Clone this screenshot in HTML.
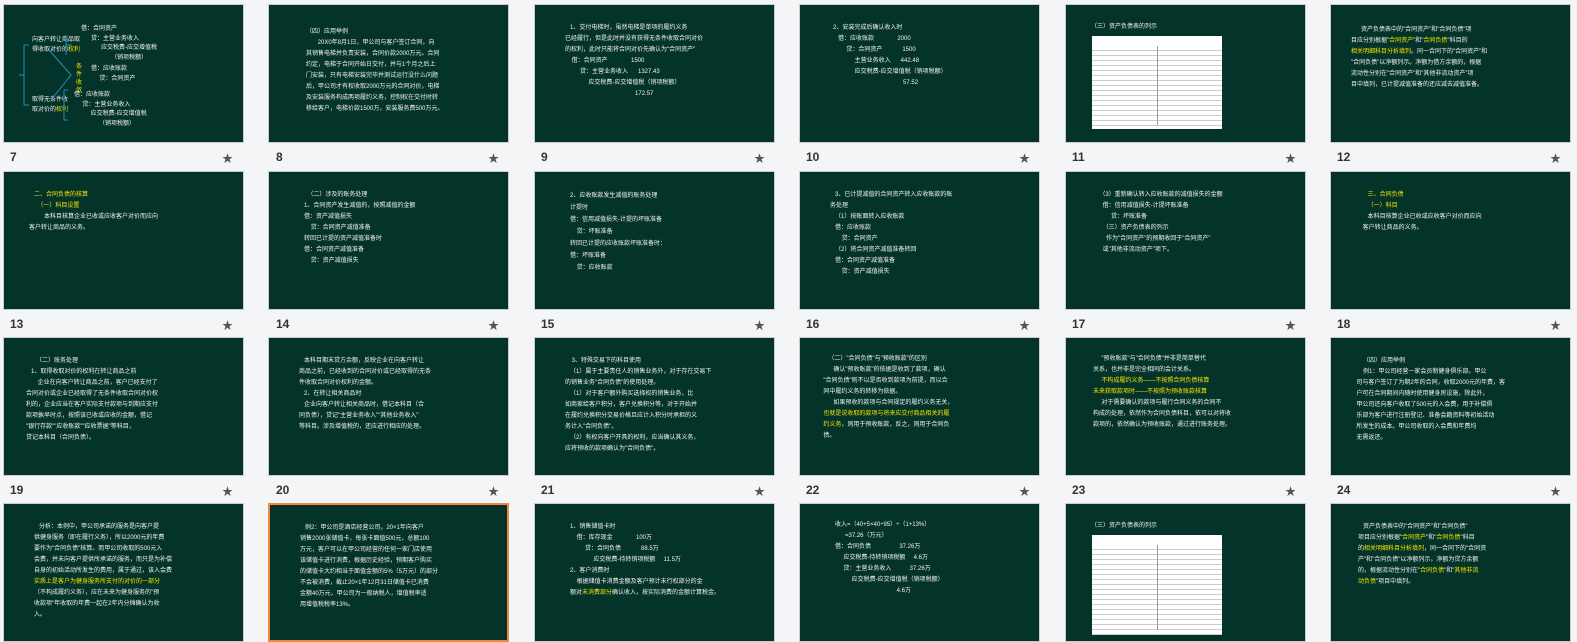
<!DOCTYPE html>
<html><head><meta charset="utf-8"><style>
body{margin:0;width:1577px;height:642px;background:#f4f5f7;position:relative;overflow:hidden;font-family:"Liberation Sans","Noto Sans CJK SC",sans-serif}
.s{position:absolute;width:239px;height:137px;background:#04332a;border:1px solid #c9cbce;overflow:hidden;color:#f2f2f2;font-size:6px;line-height:9.5px}
.sel{border:2px solid #f0883e;width:237px;height:135px}
.n{position:absolute;font-size:12px;font-weight:bold;color:#333}
.st{position:absolute;font-size:11px;color:#555}
.t{position:absolute;white-space:pre}
.y{color:#f5e600}
.tb{position:absolute;background:#fff;background-image:repeating-linear-gradient(#fff 0,#fff 4px,#ccc 4px,#ccc 5px)}
.tb:before{content:"";position:absolute;left:0;top:0;width:100%;height:12px;background:#fff}
.tb:after{content:"";position:absolute;left:50%;top:10px;width:1px;height:85%;background:#999}
</style></head><body>

<!-- Row 1 -->
<div class="s" style="left:3px;top:4px">
<div class="t" style="left:28px;top:30px;line-height:10px">向客户转让商品取
得收取对价的<span class="y">权利</span></div>
<div class="t" style="left:77px;top:20px">借：合同资产
      贷：主营业务收入
            应交税费-应交增值税
                  （销项税额）</div>
<div class="t y" style="left:72px;top:58px;line-height:8px">条
件
收
敛</div>
<div class="t" style="left:87px;top:60px">借：应收账款
     贷：合同资产</div>
<div class="t" style="left:28px;top:90px;line-height:10px">取得无条件收
取对价的<span class="y">权利</span></div>
<div class="t" style="left:70px;top:86px">借：应收账款
     贷：主营业务收入
          应交税费-应交增值税
               （销项税额）</div>
<svg style="position:absolute;left:0;top:0" width="239" height="137"><g stroke="#1e8fc0" fill="none" stroke-width="1"><path d="M15 70h5M20 40v60M20 40h5M20 100h5M62 30v20M62 40h6M45 45l22 25-20 25M60 85v30M60 85h4M60 115h4"/></g></svg>
</div>
<div class="n" style="left:10px;top:150px">7</div><div class="st" style="left:222px;top:150px">★</div>

<div class="s" style="left:268px;top:4px">
<div class="t" style="left:37px;top:22px;line-height:11px">（四）应用举例
       20X0年8月1日，甲公司与客户签订合同，向
其销售电梯并负责安装，合同价款2000万元。合同
约定，电梯于合同开始日交付，并与1个月之后上
门安装，只有电梯安装完毕并测试运行没什么问题
后，甲公司才有权收取2000万元的合同对价，电梯
及安装服务构成两项履约义务，控制权在交付时转
移给客户，电梯价款1500万，安装服务费500万元。</div></div>
<div class="n" style="left:276px;top:150px">8</div><div class="st" style="left:488px;top:150px">★</div>

<div class="s" style="left:534px;top:4px">
<div class="t" style="left:30px;top:18px;line-height:11px">   1、交付电梯时，虽然电梯是单项的履约义务
已经履行，但是此时并没有获得无条件收取合同对价
的权利，此时只能将合同对价先确认为"合同资产"
    借：合同资产              1500
         贷：主营业务收入      1327.43
              应交税费-应交增值税（销项税额）
                                          172.57</div></div>
<div class="n" style="left:541px;top:150px">9</div><div class="st" style="left:754px;top:150px">★</div>

<div class="s" style="left:799px;top:4px">
<div class="t" style="left:33px;top:18px;line-height:11px">2、安装完成后确认收入时
   借：应收账款              2000
        贷：合同资产            1500
             主营业务收入      442.48
             应交税费-应交增值税（销项税额）
                                          57.52</div></div>
<div class="n" style="left:806px;top:150px">10</div><div class="st" style="left:1019px;top:150px">★</div>

<div class="s" style="left:1065px;top:4px">
<div class="t" style="left:25px;top:18px">（三）资产负债表的列示</div>
<div class="tb" style="left:26px;top:31px;width:130px;height:93px"></div></div>
<div class="n" style="left:1072px;top:150px">11</div><div class="st" style="left:1285px;top:150px">★</div>

<div class="s" style="left:1330px;top:4px">
<div class="t" style="left:20px;top:20px;line-height:11px">      资产负债表中的"合同资产"和"合同负债"项
目应分别根据"<span class="y">合同资产</span>"和"<span class="y">合同负债</span>"科目的
<span class="y">相关明细科目分析填列</span>。同一合同下的"合同资产"和
"合同负债"以净额列示。净额为借方余额的，根据
流动性分别在"合同资产"和"其他非流动资产"项
目中填列，已计提减值准备的还应减去减值准备。</div></div>
<div class="n" style="left:1337px;top:150px">12</div><div class="st" style="left:1550px;top:150px">★</div>

<!-- Row 2 -->
<div class="s" style="left:3px;top:171px">
<div class="t" style="left:25px;top:18px;line-height:11px"><span class="y">   二、合同负债的核算</span>
<span class="y">     （一）科目设置</span>
         本科目核算企业已收或应收客户对价而应向
客户转让商品的义务。</div></div>
<div class="n" style="left:10px;top:317px">13</div><div class="st" style="left:222px;top:317px">★</div>

<div class="s" style="left:268px;top:171px">
<div class="t" style="left:30px;top:18px;line-height:11px">     （二）涉及的账务处理
   1、合同资产发生减值的，按照减值的金额
   借：资产减值损失
       贷：合同资产减值准备
   转回已计提的资产减值准备时
   借：合同资产减值准备
       贷：资产减值损失</div></div>
<div class="n" style="left:276px;top:317px">14</div><div class="st" style="left:488px;top:317px">★</div>

<div class="s" style="left:534px;top:171px">
<div class="t" style="left:30px;top:18px;line-height:12px">   2、应收账款发生减值的账务处理
   计提时
   借：信用减值损失-计提的坏账准备
       贷：坏账准备
   转回已计提的应收账款坏账准备时：
   借：坏账准备
       贷：应收账款</div></div>
<div class="n" style="left:541px;top:317px">15</div><div class="st" style="left:754px;top:317px">★</div>

<div class="s" style="left:799px;top:171px">
<div class="t" style="left:25px;top:18px;line-height:11px">      3、已计提减值的合同资产转入应收账款的账
   务处理
      （1）按账面转入应收账款
      借：应收账款
          贷：合同资产
      （2）将合同资产减值准备转回
      借：合同资产减值准备
          贷：资产减值损失</div></div>
<div class="n" style="left:806px;top:317px">16</div><div class="st" style="left:1019px;top:317px">★</div>

<div class="s" style="left:1065px;top:171px">
<div class="t" style="left:25px;top:18px;line-height:11px">     （3）重新确认转入应收账款的减值损失的金额
       借：信用减值损失-计提坏账准备
            贷：坏账准备
       （三）资产负债表的列示
         作为"合同资产"的预期收回于"合同资产"
       或"其他非流动资产"项下。</div></div>
<div class="n" style="left:1072px;top:317px">17</div><div class="st" style="left:1285px;top:317px">★</div>

<div class="s" style="left:1330px;top:171px">
<div class="t" style="left:25px;top:18px;line-height:11px"><span class="y">       三、合同负债</span>
<span class="y">       （一）科目</span>
       本科目核算企业已收或应收客户对价而应向
    客户转让商品的义务。</div></div>
<div class="n" style="left:1337px;top:317px">18</div><div class="st" style="left:1550px;top:317px">★</div>

<!-- Row 3 -->
<div class="s" style="left:3px;top:337px">
<div class="t" style="left:22px;top:18px;line-height:11px">      （二）账务处理
   1、取得收取对价的权利在转让商品之前
       企业在向客户转让商品之前，客户已经支付了
合同对价或企业已经取得了无条件收取合同对价权
利的，企业应当在客户实际支付款项与到期应支付
款项孰早时点，按照该已收或应收的金额，借记
"银行存款""应收账款""应收票据"等科目，
贷记本科目（合同负债）。</div></div>
<div class="n" style="left:10px;top:483px">19</div><div class="st" style="left:222px;top:483px">★</div>

<div class="s" style="left:268px;top:337px">
<div class="t" style="left:25px;top:18px;line-height:11px">      本科目期末贷方余额，反映企业在向客户转让
   商品之前，已经收到的合同对价或已经取得的无条
   件收取合同对价权利的金额。
      2、在转让相关商品时
      企业向客户转让相关商品时，借记本科目（合
   同负债），贷记"主营业务收入""其他业务收入"
   等科目。涉及增值税的，还应进行相应的处理。</div></div>
<div class="n" style="left:276px;top:483px">20</div><div class="st" style="left:488px;top:483px">★</div>

<div class="s" style="left:534px;top:337px">
<div class="t" style="left:25px;top:18px;line-height:11px">       3、特殊交易下的科目使用
      （1）属于主要责任人的销售业务外，对于存在交易下
   的销售业务"合同负债"的使用处理。
      （1）对于客户额外购买选择权的销售业务，比
   如商家给客户积分，客户兑换积分等，对于开始并
   在履约兑换积分交易价格且应计入积分时承担的义
   务计入"合同负债"。
      （2）有权向客户开具的权利，应当确认其义务，
   应将预收的款项确认为"合同负债"。</div></div>
<div class="n" style="left:541px;top:483px">21</div><div class="st" style="left:754px;top:483px">★</div>

<div class="s" style="left:799px;top:337px">
<div class="t" style="left:20px;top:16px;line-height:11px">     （二）"合同负债"与"预收账款"的区别
        确认"预收账款"的依据是收到了款项，确认
  "合同负债"则不以是否收到款项为前提，而以合
  同中履约义务的转移为依据。
        如果预收的款项与合同规定的履约义务无关，
  <span class="y">也就是说收取的款项与将来应交付商品相关的履</span>
  <span class="y">约义务</span>，则用于预收账款，反之，则用于合同负
  债。</div></div>
<div class="n" style="left:806px;top:483px">22</div><div class="st" style="left:1019px;top:483px">★</div>

<div class="s" style="left:1065px;top:337px">
<div class="t" style="left:22px;top:16px;line-height:11px">        "预收账款"与"合同负债"并非是简单替代
   关系，也并非是完全相同的会计关系。
        <span class="y">不构成履约义务——不按照合同负债核算</span>
   <span class="y">未来获取款项时——不按照为预收账款核算</span>
        对于需要确认的款项与履行合同义务的合同不
   构成的处理，依然作为合同负债科目，依可以对将收
   款项的，依然确认为预收账款，通过进行账务处理。</div></div>
<div class="n" style="left:1072px;top:483px">23</div><div class="st" style="left:1285px;top:483px">★</div>

<div class="s" style="left:1330px;top:337px">
<div class="t" style="left:22px;top:18px;line-height:11px">      （四）应用举例
      例1：甲公司经营一家会员制健身俱乐部。甲公
  司与客户签订了为期2年的合同，收取2000元的年费，客
  户可在合同期间内随时使用健身房设施，除此外，
  甲公司还向客户收取了500元的入会费，用于补偿俱
  乐部为客户进行注册登记、准备会籍资料等初始活动
  所发生的成本。甲公司收取的入会费和年费均
  无需返还。</div></div>
<div class="n" style="left:1337px;top:483px">24</div><div class="st" style="left:1550px;top:483px">★</div>

<!-- Row 4 -->
<div class="s" style="left:3px;top:503px">
<div class="t" style="left:25px;top:18px;line-height:11px">      分析：本例中，甲公司承诺的服务是向客户提
   供健身服务（即在履行义务），所以2000元的年费
   要作为"合同负债"核算。而甲公司收取的500元入
   会费，并未向客户提供所承诺的服务，而只是为补偿
   自身的初始活动所发生的费用，属于通过，该入会费
   <span class="y">实质上是客户为健身服务所支付的对价的一部分</span>
   （不构成履约义务），应在未来为健身服务的"预
   收款项"年收取的年费一起在2年内分摊确认为收
   入。</div></div>

<div class="s sel" style="left:268px;top:503px">
<div class="t" style="left:25px;top:18px;line-height:11px">      例2：甲公司是酒店经营公司，20×1年向客户
   销售2000张储值卡，每张卡面值500元，总额100
   万元，客户可以在甲公司经营的任何一家门店使用
   该储值卡进行消费，根据历史经验，预期客户购买
   的储值卡大约相当于面值金额的5%（5万元）的部分
   不会被消费，截止20×1年12月31日储值卡已消费
   金额40万元，甲公司为一般纳税人，增值税率适
   用增值税税率13%。</div></div>

<div class="s" style="left:534px;top:503px">
<div class="t" style="left:30px;top:18px;line-height:11px">   1、销售储值卡时
       借：库存现金              100万
            贷：合同负债            88.5万
                 应交税费-待转销项税额     11.5万
   2、客户消费时
       根据储值卡消费金额及客户预计未行权部分的金
   额对<span class="y">未消费部分</span>确认收入，按实际消费的金额计算税金。</div></div>

<div class="s" style="left:799px;top:503px">
<div class="t" style="left:30px;top:16px;line-height:11px">   收入=（40+5×40÷95）÷（1+13%）
         =37.26（万元）
   借：合同负债                 37.26万
        应交税费-待转销项税额     4.6万
        贷：主营业务收入           37.26万
             应交税费-应交增值税（销项税额）
                                        4.6万</div></div>

<div class="s" style="left:1065px;top:503px">
<div class="t" style="left:25px;top:18px">（三）资产负债表的列示</div>
<div class="tb" style="left:26px;top:31px;width:130px;height:100px"></div></div>

<div class="s" style="left:1330px;top:503px">
<div class="t" style="left:22px;top:18px;line-height:11px">      资产负债表中的"合同资产"和"合同负债"
   项目应分别根据"<span class="y">合同资产</span>"和"<span class="y">合同负债</span>"科目
   的<span class="y">相关明细科目分析填列</span>，同一合同下的"合同资
   产"和"合同负债"以净额列示，净额为贷方余额
   的，根据流动性分别在"<span class="y">合同负债</span>"和"<span class="y">其他非流</span>
   <span class="y">动负债</span>"项目中填列。</div></div>
</body></html>
